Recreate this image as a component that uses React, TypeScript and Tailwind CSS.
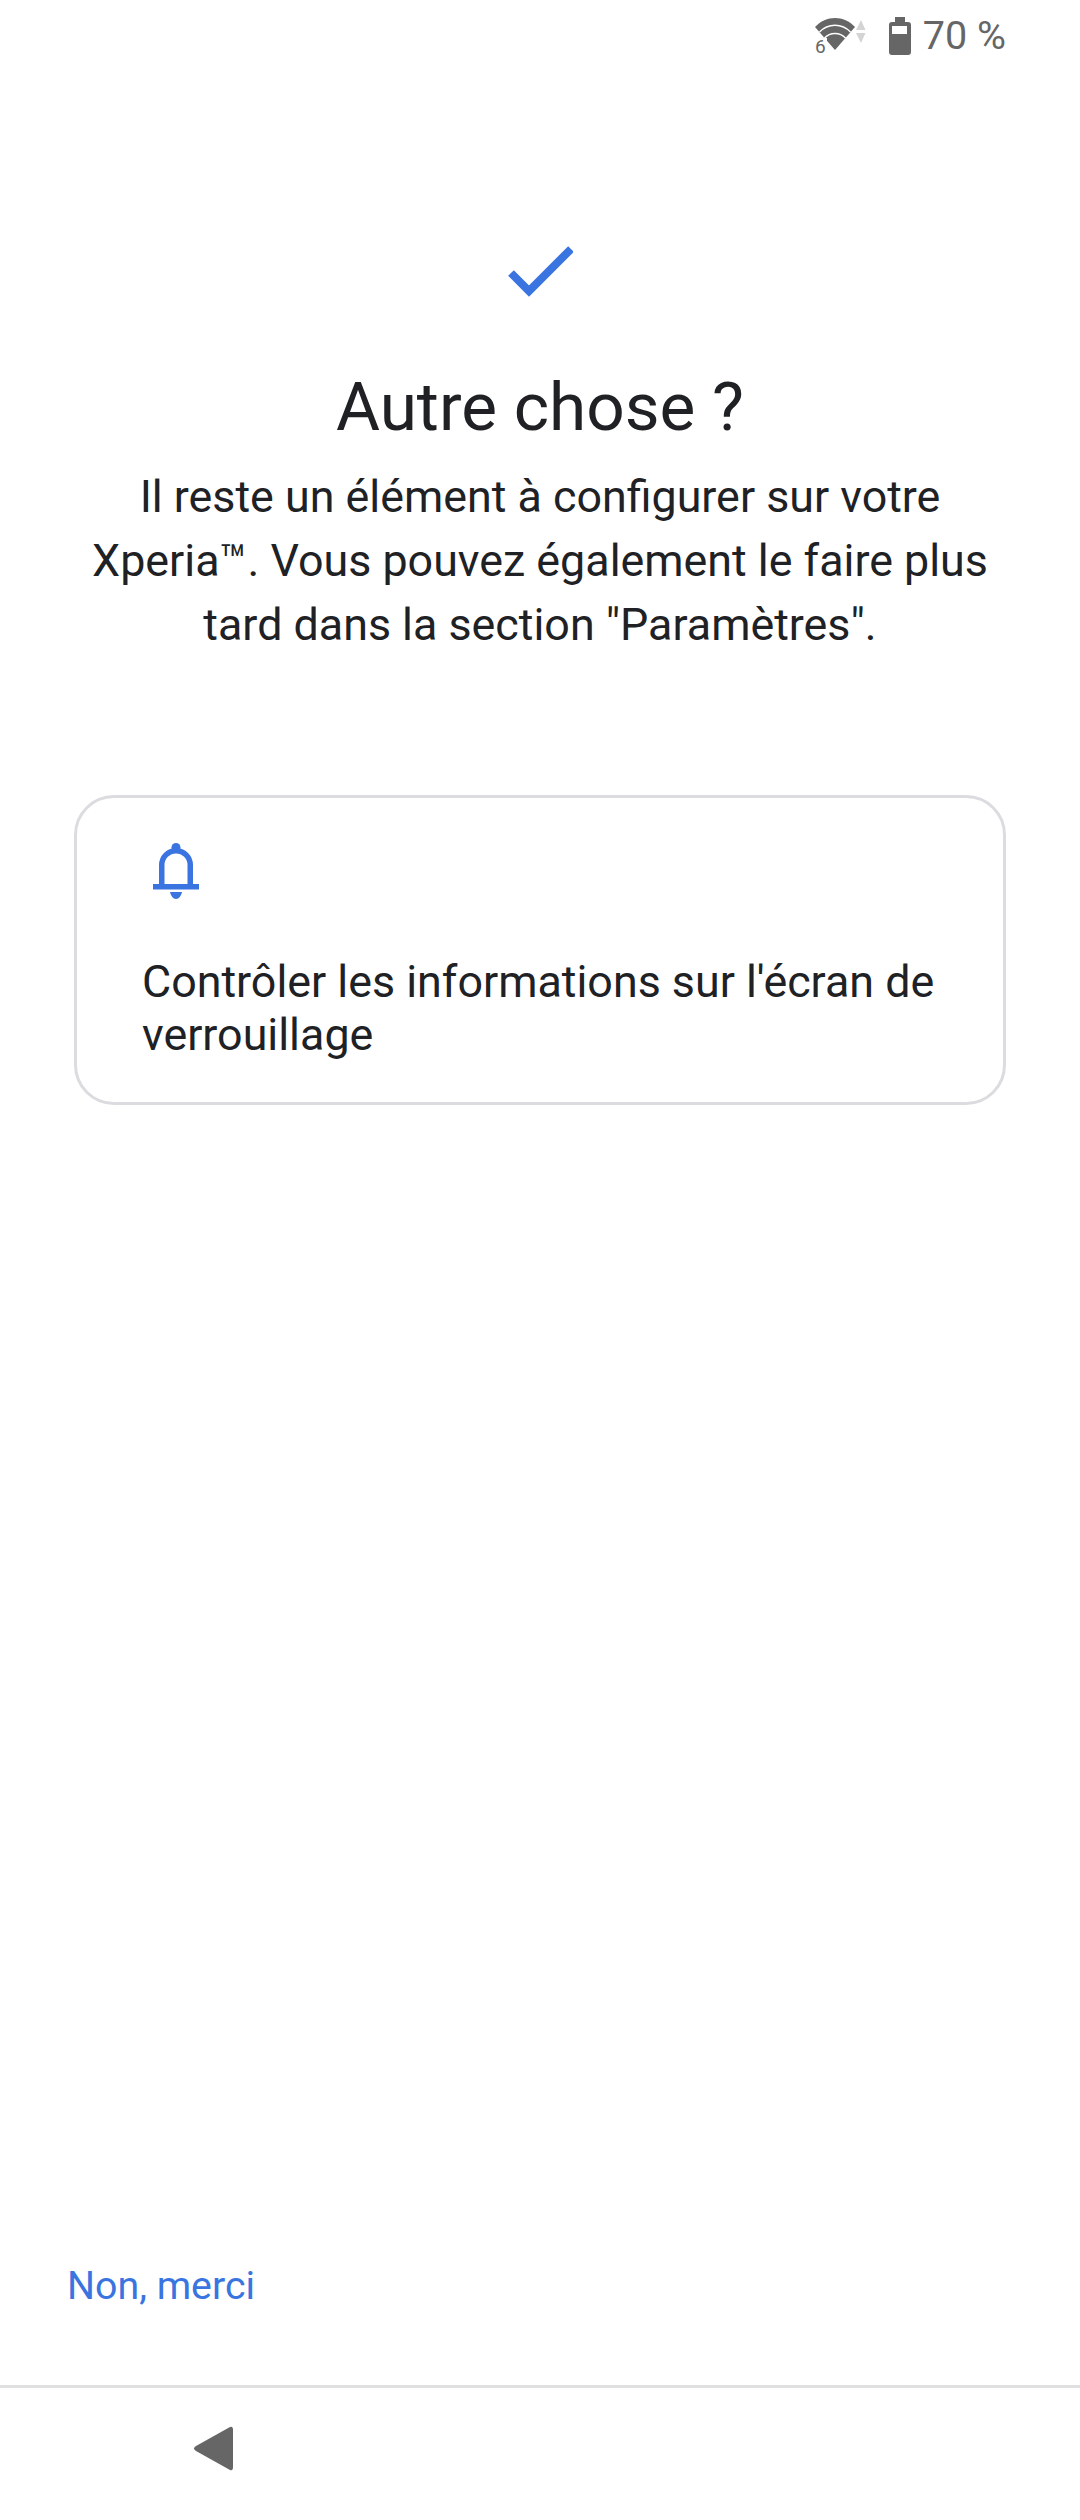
export default function App() {
  return (
    <div className="flex h-[2520px] w-[1080px] flex-col bg-white font-['Roboto',sans-serif] text-[#202124]">
      <div className="flex h-[72px] items-center justify-end pr-[74px]">
        <svg width="52" height="38" viewBox="0 0 52 38" className="mr-[22px] overflow-visible">
          <path d="M0 10 C11 -2 29 -2 40 10 L20 33 Z" fill="#666" />
          <path d="M4.5 15 C13 6 27 6 35.5 15" fill="none" stroke="#fff" strokeWidth="1.5" />
          <path d="M9.5 21 C15 15 25 15 30.5 21" fill="none" stroke="#fff" strokeWidth="1.5" />
          <path d="M46 3 L50.5 13 L41 13 Z M41 16 L50.5 16 L46 26 Z" fill="#d4d4d4" />
          <rect x="0" y="21" width="12" height="17" fill="#fff" />
          <text x="0" y="36" fontSize="19" fill="#666" fontFamily="Roboto">6</text>
        </svg>
        <svg width="22" height="38" viewBox="0 0 22 38" className="mr-[12px]">
          <path d="M6 0 H16 V5 H19 Q22 5 22 8 V35 Q22 38 19 38 H3 Q0 38 0 35 V8 Q0 5 3 5 H6 Z M3 9 V17 H18 V9 Z" fill="#666" fillRule="evenodd" />
        </svg>
        <span className="text-[39.5px] leading-none text-[#666]">70 %</span>
      </div>
      <div className="mt-[174px] flex justify-center">
        <svg width="66" height="52" viewBox="0 0 66 52">
          <path d="M4 27 L22 45 L64 3" fill="none" stroke="#3a74e0" strokeWidth="8" />
        </svg>
      </div>
      <h1 className="mt-[71px] text-center text-[67.5px] font-normal leading-[76px]">Autre chose ?</h1>
      <p className="mt-[20px] px-[74px] text-center text-[44.8px] leading-[64px]">
        Il reste un élément à configurer sur votre Xperia™. Vous pouvez également le faire plus tard dans la section "Paramètres".
      </p>
      <div className="mx-[74px] mt-[138px] h-[310px] rounded-[40px] border-[3px] border-[#dcdce0] pl-[65px] pr-[40px] pt-[45px]">
        <svg width="46" height="56" viewBox="0 0 46 56" className="ml-[11px] block">
          <circle cx="23" cy="4.5" r="4.5" fill="#3a74e0" />
          <path d="M8.75 43 V22 A14.25 14.25 0 0 1 37.25 22 V43" fill="none" stroke="#3a74e0" strokeWidth="5.5" />
          <rect x="0" y="41" width="46" height="5.5" fill="#3a74e0" />
          <path d="M17 49 H29 C28 53 26 56 23 56 C20 56 18 53 17 49 Z" fill="#3a74e0" />
        </svg>
        <p className="mt-[56px] text-[44.8px] leading-[53px]">Contrôler les informations sur l'écran de verrouillage</p>
      </div>
      <div className="flex-1" />
      <div className="pb-[76px] pl-[67px] text-[39.3px] leading-[46px] text-[#3a74e0]">Non, merci</div>
      <div className="h-[3px] bg-[#e0e0e0]" />
      <div className="flex h-[132px] items-start pl-[193px] pt-[37px]">
        <svg width="41" height="47" viewBox="0 0 41 47">
          <path d="M37 2 Q40 1 40 5 V42 Q40 46 37 45 L3 26 Q-1 23.5 3 21 Z" fill="#666" />
        </svg>
      </div>
    </div>
  );
}
